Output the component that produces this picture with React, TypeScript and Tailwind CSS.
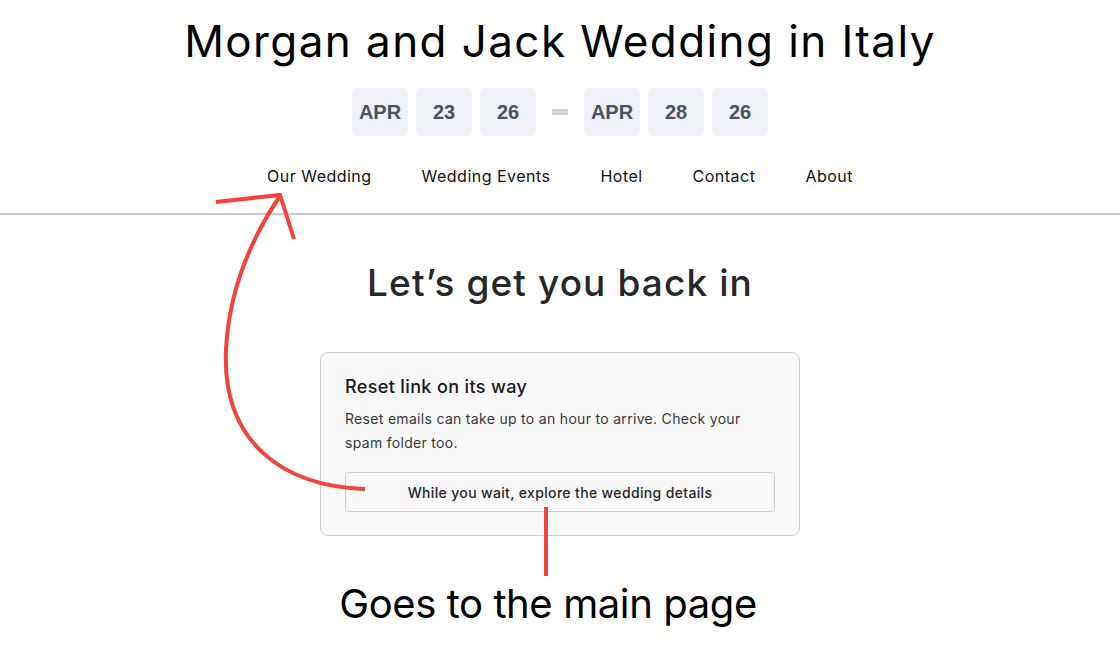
import React from "react";

const dates = ["APR", "23", "26"];
const dates2 = ["APR", "28", "26"];
const nav = ["Our Wedding", "Wedding Events", "Hotel", "Contact", "About"];

function Chip({ label }: { label: string }) {
  return (
    <div className="w-14 h-12 rounded-md bg-[#eef1f5] flex items-center justify-center text-[20px] font-bold text-[#4b5160] font-['Liberation_Sans',sans-serif]">
      {label}
    </div>
  );
}

export default function App() {
  return (
    <div className="relative w-[1120px] h-[648px] overflow-hidden bg-white font-['Inter',sans-serif]">
      {/* Header */}
      <header className="flex flex-col items-center pt-3 border-b-2 border-[#c8cacd] pb-[25px]">
        <h1 className="text-[44px] leading-[58px] font-normal text-black tracking-[0.032em]">
          Morgan and Jack Wedding in Italy
        </h1>
        <div className="mt-[18px] flex items-center gap-2">
          {dates.map((d, i) => (
            <Chip key={"a" + i} label={d} />
          ))}
          <div className="mx-2 w-4 h-[6px] bg-[#cfd2d6]" />
          {dates2.map((d, i) => (
            <Chip key={"b" + i} label={d} />
          ))}
        </div>
        <nav className="mt-7 flex items-center">
          {nav.map((n) => (
            <a key={n} className="px-[25px] text-[16px] leading-6 tracking-[0.03em] text-[#111]">
              {n}
            </a>
          ))}
        </nav>
      </header>

      {/* Main */}
      <main className="flex flex-col items-center">
        <h2 className="mt-[46px] text-[37px] leading-[44px] font-medium tracking-[0.03em] text-[#26272b]">
          Let’s get you back in
        </h2>
        <div className="mt-[47px] w-[480px] rounded-lg border border-[#cfd1d6] bg-[#f9f9fa] px-6 pt-5 pb-[23px]">
          <h3 className="text-[18px] leading-7 font-medium tracking-[0.02em] text-[#18181b]">
            Reset link on its way
          </h3>
          <p className="mt-1.5 text-[14px] leading-6 tracking-[0.022em] text-[#35363a]">
            Reset emails can take up to an hour to arrive. Check your spam folder too.
          </p>
          <button className="mt-[17px] w-full h-10 rounded border border-[#c9ccd1] bg-[#f9f9fa] text-[14px] font-medium tracking-[0.025em] text-[#27272a]">
            While you wait, explore the wedding details
          </button>
        </div>
        <p className="mt-11 pr-6 text-[40px] leading-[48px] text-black tracking-[-0.01em]">
          Goes to the main page
        </p>
      </main>

      {/* Annotations */}
      <svg
        className="pointer-events-none absolute inset-0"
        width="1120"
        height="648"
        viewBox="0 0 1120 648"
        fill="none"
        stroke="#f4433a"
        strokeWidth="4"
        strokeLinecap="butt"
      >
        <path d="M365 489 C 280 486, 222 440, 226 350 C 229 290, 250 240, 280 196" />
        <path d="M216 202 L280 195 L294 239" />
        <path d="M546 507 L546 576" />
      </svg>
    </div>
  );
}
